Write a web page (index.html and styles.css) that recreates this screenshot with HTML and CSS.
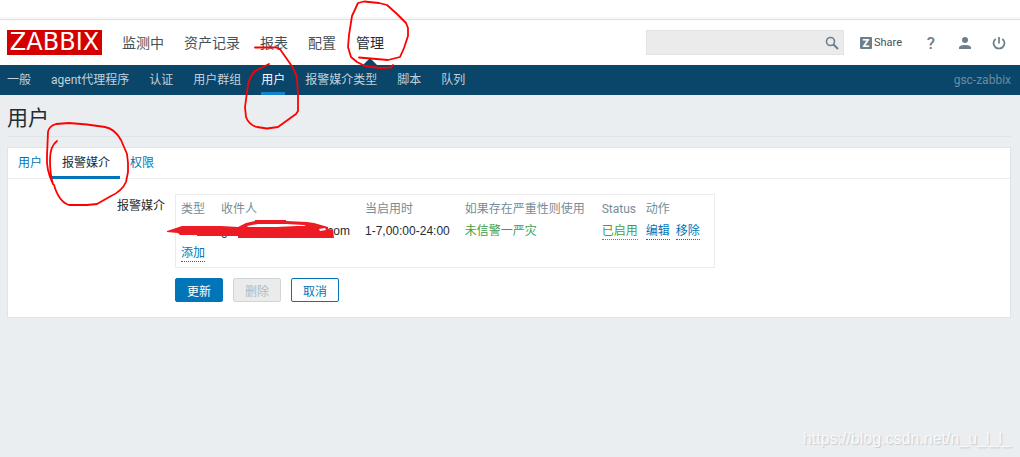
FILE: index.html
```html
<!DOCTYPE html>
<html lang="zh-CN">

<head>
    <meta charset="UTF-8">
    <meta name="viewport" content="width=device-width, initial-scale=1.0">
    <title>用户</title>
    <link rel="stylesheet" href="styles.css">
</head>

<body>
    <header class="header">
        <a class="logo" href="#">ZABBIX</a>
        <nav class="main-nav">
            <a href="#">监测中</a>
            <a href="#">资产记录</a>
            <a href="#">报表</a>
            <a href="#">配置</a>
            <a href="#" class="selected">管理</a>
        </nav>
        <form class="search">
            <input type="text" aria-label="搜索">
            <button type="button" aria-label="搜索">
                <svg width="14" height="14" viewBox="0 0 14 14" fill="none" stroke="#6c7f8b">
                    <circle cx="5.500" cy="5.500" r="4" stroke-width="1.600" />
                    <path d="M8.500 8.500l4.500 4.500" stroke-width="2" />
                </svg>
            </button>
        </form>
        <a class="share" href="#"><span class="share-icon">Z</span>Share</a>
        <a class="icon help" href="#" aria-label="帮助">?</a>
        <a class="icon" href="#" aria-label="用户资料">
            <svg width="14" height="14" viewBox="0 0 14 14" fill="#6c7f8b">
                <circle cx="7" cy="4" r="3" />
                <path d="M1 13v-1.500c0-3.500 12-3.500 12 0V13z" />
            </svg>
        </a>
        <a class="icon" href="#" aria-label="退出">
            <svg width="14" height="14" viewBox="0 0 14 14" fill="none" stroke="#6c7f8b" stroke-width="1.700">
                <path d="M7 1v6.500M3.700 3C-.500 6 2 12.500 7 12.500S14.500 6 10.300 3" />
            </svg>
        </a>
    </header>

    <nav class="sub-nav">
        <a href="#">一般</a>
        <a href="#">agent代理程序</a>
        <a href="#">认证</a>
        <a href="#">用户群组</a>
        <a href="#" class="selected">用户</a>
        <a href="#">报警媒介类型</a>
        <a href="#">脚本</a>
        <a href="#">队列</a>
        <span class="server-name">gsc-zabbix</span>
    </nav>

    <main class="content">
        <h1>用户</h1>
        <section class="panel">
            <nav class="tabs">
                <a href="#">用户</a>
                <a href="#" class="selected">报警媒介</a>
                <a href="#">权限</a>
            </nav>
            <form class="form">
                <div class="form-label" id="media-label">报警媒介</div>
                <div class="form-field">
                    <div class="media-box">
                        <table class="media" aria-labelledby="media-label">
                            <thead>
                                <tr>
                                    <th>类型</th>
                                    <th class="recipient">收件人</th>
                                    <th>当启用时</th>
                                    <th class="severity">如果存在严重性则使用</th>
                                    <th class="status">Status</th>
                                    <th>动作</th>
                                </tr>
                            </thead>
                            <tbody>
                                <tr>
                                    <td></td>
                                    <td><span class="masked"><span>g</span><span>.com</span></span></td>
                                    <td>1-7,00:00-24:00</td>
                                    <td class="green">未信警一严灾</td>
                                    <td class="status"><a href="#" class="link green">已启用</a></td>
                                    <td class="actions"><a href="#" class="link">编辑</a><a href="#" class="link">移除</a></td>
                                </tr>
                                <tr>
                                    <td colspan="6"><a href="#" class="link">添加</a></td>
                                </tr>
                            </tbody>
                        </table>
                    </div>
                    <div class="buttons">
                        <button type="button" class="primary">更新</button>
                        <button type="button" disabled>删除</button>
                        <button type="button">取消</button>
                    </div>
                </div>
            </form>
        </section>
    </main>

    <div class="watermark">https://blog.csdn.net/n_u_l_l_</div>

    <!-- hand-drawn marks over the page -->
    <svg class="marks" width="1020" height="457" viewBox="0 0 1020 457" fill="none" stroke="#f00" stroke-width="1.800" stroke-linecap="round" stroke-linejoin="round">
        <path d="M359 57.500L388 60L400 57L404 48L408 36L408 28L406 23L397 14L387 5L379 3L364 1.500L358 3L352 16L349 35L348 47L351 57L357 62L365 66L380 68L391 67.500L393 65" />
        <path d="M255 47.500H274Q279 47 282 52L289 62Q295 70 297 78L298 95V111L296 114L278 127L267 128.500L257 127Q249 125 246 117L245 107L248 85Q250 76 255 71L269 64" />
        <path d="M57 141Q50 146 50 160Q50 175 53 184M53 184Q46 170 47 156L48 132Q49 126 56 124L69 123L87 124.500L105 127Q115 129 121 140L127 154L128 163V172L126 182Q122 191 111 196L97 204L87 205H69Q59 202 54 185" />
        <path fill="#ed1c24" fill-rule="evenodd" stroke="none" d="M167 231L182 226H221L238 227L246 223L255 221V220H286V221L307 222L314 223L328 227V229L333 230L334 238H238V236H197V235H180L178 233L167 232ZM247 226L258 224H286L304 225L306 226H297L276 227H248ZM319 229L325 228L326 230L320 231Z" />
    </svg>
</body>

</html>
```
FILE: styles.css
```css
* {
    box-sizing: border-box;
}

body {
    margin: 0;
    padding-top: 19px;
    min-height: 100vh;
    background: linear-gradient(#ffffff 65px, #ebeef0 65px);
    color: #1f2c33;
    font-family: Roboto, "Noto Sans CJK SC", sans-serif;
    font-size: 12px;
    line-height: 16px;
}

a {
    color: #0275b8;
    text-decoration: none;
}

.header {
    display: flex;
    align-items: center;
    height: 46px;
    padding: 0 14px 0 7px;
    background-color: #ffffff;
    border-top: 1px solid #dfdfdf;
    box-shadow: 0 -2px 0 #f8f8f8;
}

.logo {
    width: 95px;
    height: 25px;
    background-color: #d40000;
    color: #ffffff;
    font-family: "DejaVu Sans", sans-serif;
    font-size: 24px;
    line-height: 25px;
    text-align: center;
}

.icon svg {
    display: block;
}

.main-nav {
    display: flex;
    align-self: stretch;
    flex: 1;
    gap: 20px;
    margin-left: 20px;
    font-size: 14px;
    line-height: 46px;
    white-space: nowrap;
}

.main-nav a {
    color: #45525a;
}

.main-nav .selected {
    display: flex;
    flex-direction: column;
    align-items: center;
    color: #1f2c33;
}

.main-nav .selected::after {
    content: "";
    margin-top: -8px;
    border: 8px solid transparent;
    border-top: 0;
    border-bottom-color: #0a466a;
}

.search {
    display: flex;
    width: 198px;
    height: 25px;
    background-color: #ebebeb;
    border: 1px solid #dfe4e7;
}

.search input {
    flex: 1;
    min-width: 0;
    padding: 0 5px;
    border: 0;
    background: none;
}

.search button {
    display: flex;
    align-items: center;
    padding: 0 4px;
    border: 0;
    background: none;
}

.share {
    display: flex;
    align-items: center;
    gap: 2px;
    margin: 0 2px 0 16px;
    color: #45525a;
    font-size: 11px;
}

.share-icon {
    width: 12px;
    height: 12px;
    background-color: #6c7f8b;
    border-radius: 1px;
    color: #ffffff;
    font-size: 11px;
    font-weight: 900;
    line-height: 13px;
    text-align: center;
}

.icon {
    width: 14px;
    margin-left: 20px;
}

.help {
    color: #6c7f8b;
    font-size: 17px;
    font-weight: 500;
    text-align: center;
}

.sub-nav {
    display: flex;
    gap: 20px;
    height: 30px;
    padding: 0 9px 0 7px;
    background-color: #0a466a;
    line-height: 30px;
    white-space: nowrap;
}

.sub-nav a {
    color: #c3d1da;
}

.sub-nav .selected {
    color: #ffffff;
    border-bottom: 3px solid #1482ca;
}

.server-name {
    margin-left: auto;
    color: #6c8ca0;
}

.content {
    padding: 0 9px 0 7px;
}

h1 {
    margin: 0 0 10px;
    padding: 8px 0 3px;
    border-bottom: 1px solid #dfe4e7;
    font-size: 21px;
    font-weight: normal;
    line-height: 30px;
}

.panel {
    background-color: #ffffff;
    border: 1px solid #dfe4e7;
}

.tabs {
    display: flex;
    height: 31px;
    border-bottom: 1px solid #ebeef0;
    line-height: 30px;
}

.tabs a {
    padding: 0 10px;
}

.tabs .selected {
    height: 31px;
    color: #1f2c33;
    border-bottom: 3px solid #0275b8;
}

.form {
    display: flex;
    gap: 10px;
    padding: 15px 0;
}

.form-label {
    width: 157px;
    padding-top: 4px;
    text-align: right;
}

.media-box {
    width: 540px;
    padding: 3px 0;
    border: 1px solid #ebebeb;
}

.media {
    border-collapse: collapse;
    white-space: nowrap;
}

.media th,
.media td {
    height: 22px;
    padding: 0 10px 0 5px;
    font-weight: normal;
    text-align: left;
}

.media th {
    color: #768d99;
}

.media td {
    font-family: "Liberation Sans", "Noto Sans CJK SC", sans-serif;
}

.media th:first-child {
    width: 40px;
}

.media .recipient {
    width: 144px;
}

.media .severity {
    width: 137px;
}

.media .status {
    width: 44px;
    padding-right: 3px;
}

.masked {
    display: flex;
    justify-content: space-between;
}

.media .green {
    color: #429e47;
}

.link {
    display: inline-block;
    border-bottom: 1px dotted;
    line-height: 15px;
}

.actions .link + .link {
    margin-left: 6px;
}

.buttons {
    display: flex;
    gap: 10px;
    margin-top: 10px;
}

.buttons button {
    width: 48px;
    height: 24px;
    padding: 0;
    background-color: #ffffff;
    border: 1px solid #0275b8;
    border-radius: 2px;
    color: #0275b8;
    font-family: inherit;
    font-size: 12px;
}

.buttons .primary {
    background-color: #0275b8;
    color: #ffffff;
}

.buttons button:disabled {
    background-color: #ebebeb;
    border-color: #ccd5d9;
    color: #acbbc2;
}

.watermark {
    position: absolute;
    right: 9px;
    bottom: 8px;
    color: #f8f9fa;
    font-family: "Liberation Sans", sans-serif;
    font-size: 16px;
    line-height: 20px;
    text-shadow: 1px 1px 1px #c4c8cb;
}

.marks {
    position: absolute;
    top: 0;
    left: 0;
    pointer-events: none;
}
```
